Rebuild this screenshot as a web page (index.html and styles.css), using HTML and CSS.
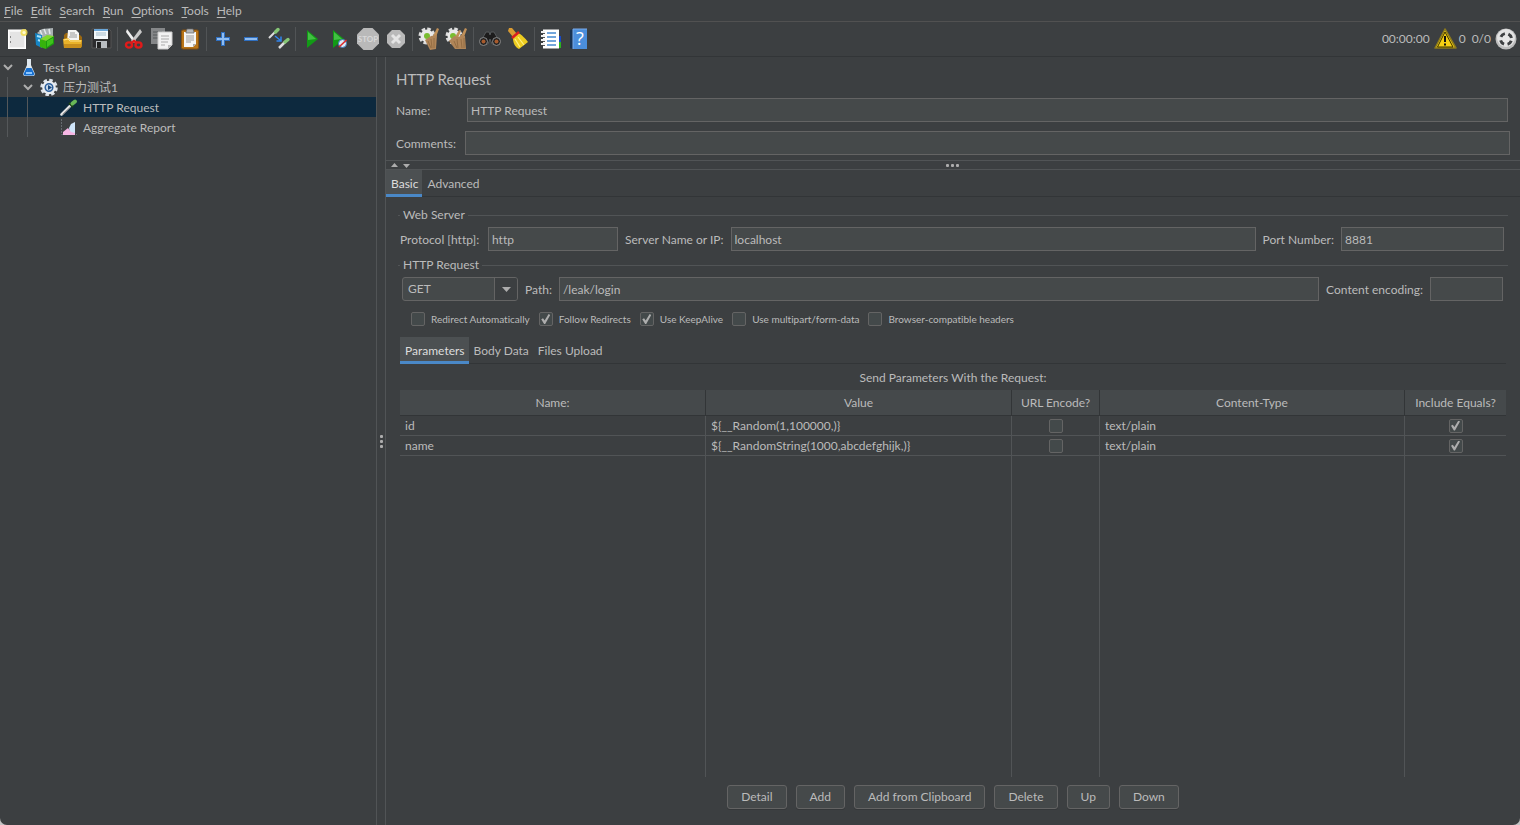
FILE: index.html
```html
<!DOCTYPE html>
<html lang="en">
<head>
<meta charset="utf-8">
<title>HTTP Request</title>
<link rel="stylesheet" href="styles.css">
</head>
<body>
<div class="app">
  <nav class="menubar">
    <button><u>F</u>ile</button><button><u>E</u>dit</button><button><u>S</u>earch</button><button><u>R</u>un</button><button><u>O</u>ptions</button><button><u>T</u>ools</button><button><u>H</u>elp</button>
  </nav>

  <div class="toolbar">
    <button aria-label="New"><svg viewBox="0 0 24 24"><rect x="3.500" y="3" width="17" height="18.500" fill="#f4f4f4" stroke="#fff"/><rect x="5" y="5" width="14" height="15" fill="#e4e4e4"/><path d="M5.500 9v2M5.500 14v2" stroke="#888"/><circle cx="19" cy="5.500" r="3.500" fill="#f1dc4c" opacity=".85"/><circle cx="19" cy="5.500" r="1.600" fill="#fffbd0"/></svg></button>
    <button aria-label="Templates"><svg viewBox="0 0 24 24"><path d="M4 6l5-4 11-1v9l-8 3z" fill="#a9b0b2"/><path d="M7 3l2 5M11 2l2 5M16 2l1 5" stroke="#e4e8ea" stroke-width="1.500"/><path d="M2 6l7 2v13l-6-3z" fill="#1686c5"/><path d="M4 9l4 1M5 13l3 1" stroke="#a6e0fa" stroke-width="2"/><path d="M7 12l6 2v8l-6-2z" fill="#36b30c"/><path d="M13 13l8-4v8l-8 5z" fill="#1c9a0e"/><path d="M7 12l7-4 7 1-8 5z" fill="#7fd92c"/><path d="M14 14l6-3v5l-6 4z" fill="#3ec21c"/></svg></button>
    <button aria-label="Open"><svg viewBox="0 0 24 24"><path d="M3 21V8l2-2h4l1 2h9l2 2v10z" fill="#9b6810"/><path d="M7 3h8l3 3v9H6z" fill="#f5f5f5"/><path d="M9 6h5M9 8h7M8 10h8" stroke="#999"/><path d="M2 12l5-1 2 2h12l-1 8H3z" fill="#eab32a"/><path d="M3 17h18l-1 4H3z" fill="#c98f1c"/><path d="M3 13l4-1 2 2h11" stroke="#ffe48a" fill="none"/></svg></button>
    <button aria-label="Save"><svg viewBox="0 0 24 24"><path d="M3 2h17l2 2v17H3z" fill="#2c2c2e" stroke="#555"/><rect x="5" y="2" width="14" height="10" fill="#f3f7fa"/><rect x="5" y="2" width="14" height="2" fill="#6ba6d8"/><path d="M7 6h10M7 8h10" stroke="#a3bbca"/><rect x="7" y="14" width="11" height="7" fill="#b8bcc0"/><rect x="8" y="15" width="4" height="6" fill="#222"/></svg></button>
    <span class="sep"></span>
    <button aria-label="Cut"><svg viewBox="0 0 24 24"><path d="M5 2l9 12-2 2L4 5z" fill="#efefef"/><path d="M18 2l-9 12 2 2 9-11z" fill="#c9c9c9"/><ellipse cx="7" cy="18" rx="3" ry="2.600" fill="none" stroke="#e01a1a" stroke-width="2.400"/><ellipse cx="16.500" cy="18" rx="3" ry="2.600" fill="none" stroke="#e01a1a" stroke-width="2.400"/><path d="M9 16l3-2 3 2" stroke="#e01a1a" stroke-width="2.500" fill="none"/></svg></button>
    <button aria-label="Copy"><svg viewBox="0 0 24 24"><path d="M1 1h14v16H1z" fill="#858789"/><path d="M3 5h9M3 8h7M3 11h5" stroke="#66696b" stroke-width="1.500"/><path d="M8 5h14v13l-4 4H8z" fill="#f2f2f2" stroke="#ccc"/><path d="M11 9h8M11 12h8M11 15h7M11 18h4" stroke="#aaa"/><path d="M22 18h-4v4z" fill="#bbb"/></svg></button>
    <button aria-label="Paste"><svg viewBox="0 0 24 24"><rect x="3.500" y="3" width="17" height="19" rx="1.500" fill="#b87418" stroke="#845110"/><path d="M6 5h12v12l-3 3H6z" fill="#f6f6f6"/><path d="M8 5l1-3h6l1 3v1H8z" fill="#b4b7ba" stroke="#666" stroke-width=".7"/><path d="M8 9h8M8 11h8M8 13h8M8 15h5" stroke="#999"/><path d="M18 17h-3v3z" fill="#aaa"/></svg></button>
    <span class="sep"></span>
    <button aria-label="Expand all"><svg viewBox="0 0 24 24"><path d="M12 5v14M5 12h14" stroke="#2f6fc0" stroke-width="4"/><path d="M12 6v12M6 12h12" stroke="#8fbcf0" stroke-width="2"/></svg></button>
    <button aria-label="Collapse all"><svg viewBox="0 0 24 24"><path d="M5 12h14" stroke="#2f6fc0" stroke-width="4"/><path d="M6 12h12" stroke="#8fbcf0" stroke-width="2"/></svg></button>
    <button aria-label="Toggle"><svg viewBox="0 0 24 24"><path d="M2 11l6-6" stroke="#ddd" stroke-width="2"/><path d="M8.500 5l2.500-2.500" stroke="#86c676" stroke-width="3.500" stroke-linecap="round"/><path d="M12 21l6-6" stroke="#ddd" stroke-width="2.500"/><path d="M18 15l3-2.500" stroke="#86c676" stroke-width="3.500" stroke-linecap="round"/><path d="M8 9l5 4M14 9.500V14H9.500" stroke="#3185ee" stroke-width="1.500" fill="none"/></svg></button>
    <span class="sep"></span>
    <button aria-label="Start"><svg viewBox="0 0 24 24"><path d="M7 3l11 9L7 21z" fill="#129a16"/><path d="M8 5l8 7-8 1z" fill="#42c043"/></svg></button>
    <button aria-label="Start no pauses"><svg viewBox="0 0 24 24"><path d="M5 3l11 9L5 21z" fill="#129a16"/><path d="M6 5l8 7-8 1z" fill="#42c043"/><circle cx="14.500" cy="16.500" r="4" fill="#dceaf6" stroke="#3a78b8"/><path d="M11 20l7.500-7" stroke="#dc2b2b" stroke-width="1.600"/></svg></button>
    <button aria-label="Stop" disabled><svg viewBox="0 0 24 24"><path d="M7.500 1h9L23 7.500v9L16.500 23h-9L1 16.500v-9z" fill="#b9b9b9"/><text x="12" y="15" font-size="8" font-weight="700" text-anchor="middle" fill="#d8d8d8">STOP</text></svg></button>
    <button aria-label="Shutdown" disabled><svg viewBox="0 0 24 24"><path d="M8 3h8l5 5v8l-5 5H8l-5-5V8z" fill="#b9b9b9"/><path d="M8 8l8 8M16 8l-8 8" stroke="#e5e5e5" stroke-width="3"/></svg></button>
    <span class="sep"></span>
    <button aria-label="Clear"><svg viewBox="0 0 24 24"><circle cx="10" cy="9" r="7" fill="none" stroke="#dedede" stroke-width="3" stroke-dasharray="3.500 2"/><circle cx="10" cy="9" r="6.500" fill="#e9e9e9"/><circle cx="10" cy="9" r="3" fill="#79bd30"/><path d="M20 1l2 1-3 8-3-1z" fill="#c09058"/><path d="M14 9l6-1-1 14-6 1-5-10z" fill="#b08558"/><path d="M14 12l1 9M17 11v10M11 14l3 7" stroke="#8d673f" stroke-width=".8"/></svg></button>
    <button aria-label="Clear all"><svg viewBox="0 0 24 24"><circle cx="9" cy="9" r="7" fill="none" stroke="#dedede" stroke-width="3" stroke-dasharray="3.500 2"/><circle cx="9" cy="9" r="6.500" fill="#e9e9e9"/><circle cx="8" cy="9" r="3" fill="#79bd30"/><path d="M14 3l2 1-3 7-3-1zM20 1l2 1-3 8-3-1z" fill="#c09058"/><path d="M9 9l5 1 2-2 4 1 1 13H10L4 14z" fill="#b08558"/><path d="M9 14l3 7M12 12l1 9M16 12l1 9M19 11v10" stroke="#8d673f" stroke-width=".8"/></svg></button>
    <span class="sep"></span>
    <button aria-label="Search"><svg viewBox="0 0 24 24"><path d="M4 12l4-7h3l1 3 1-3h3l4 7-2 5h-4l-2-5-2 5H6z" fill="#1c1c1c" stroke="#55595b"/><circle cx="5.500" cy="14.500" r="4" fill="#232323" stroke="#8a8a8a"/><circle cx="5.500" cy="14.500" r="2" fill="#a85b2d"/><circle cx="18.500" cy="14.500" r="4" fill="#232323" stroke="#8a8a8a"/><circle cx="18.500" cy="14.500" r="2" fill="#a85b2d"/></svg></button>
    <button aria-label="Reset search"><svg viewBox="0 0 24 24"><path d="M3 1h3l5 6-4 3-5-6z" fill="#d99b32"/><path d="M7 11l5-5c3 1 7 5 10 9l-9 7c-4-2-6-6-6-11z" fill="#edcc20"/><path d="M9 12l5 8M12 10l6 8" stroke="#fff083" stroke-width="1.200"/><path d="M6 11l7-6" stroke="#d81f1f" stroke-width="2.500"/></svg></button>
    <span class="sep"></span>
    <button aria-label="Function helper"><svg viewBox="0 0 24 24"><path d="M18 14h4v7h-6z" fill="#2bb321"/><path d="M18 9h4v6h-4z" fill="#174ac5"/><rect x="4" y="2.500" width="16" height="19" fill="#fff"/><path d="M8 6h9M8 10h9M8 14h9M8 18h9" stroke="#4589cf" stroke-width="1.500"/><path d="M2 5h4M2 9h4M2 13h4M2 17h4" stroke="#f2f2f2" stroke-width="2"/><path d="M4 6.500h2M4 10.500h2M4 14.500h2M4 18.500h2" stroke="#555"/></svg></button>
    <button aria-label="Help"><svg viewBox="0 0 24 24"><path d="M3 3l3-1v20l-3-1z" fill="#183250"/><rect x="6" y="2" width="14" height="20" fill="#4b8edb"/><path d="M6 22V2h14" stroke="#7aabea" fill="none"/><text class="mark" x="13" y="18" font-size="18" text-anchor="middle" fill="#fff">?</text></svg></button>
    <div class="status">
      <span class="clock">00:00:00</span>
      <svg viewBox="0 0 24 24"><path d="M12 2L2 21h21z" fill="#f5cf13" stroke="#8c7a1c" stroke-width="1.500" stroke-linejoin="round"/><path d="M12 5L4.500 20h15.500z" fill="none" stroke="#3b3300"/><path d="M12 9v6M12 16.500v2" stroke="#111" stroke-width="2"/></svg>
      <span class="errors">0</span>
      <span>0/0</span>
      <svg viewBox="0 0 24 24"><circle cx="12" cy="12" r="10.500" fill="#bdbdbd"/><circle cx="12" cy="11" r="9" fill="#e4e4e4"/><circle cx="12" cy="12" r="5.500" fill="none" stroke="#3e4042" stroke-width="3" stroke-dasharray="5 3.640" stroke-dashoffset="-1.800"/><circle cx="12" cy="12" r="3.500" fill="#e8e8e8"/></svg>
    </div>
  </div>

  <main class="workspace">
    <aside class="tree">
      <div class="node"><svg class="chevron" viewBox="0 0 20 20"><path d="M4 8l4 4 4-4"/></svg><svg class="pic" viewBox="0 0 18 18"><path d="M7 1h4v6l4 9-1 2H4l-1-2 4-9z" fill="#dfe8ef"/><path d="M6.500 10h5l3 6-1 1.500h-9L3.500 16z" fill="#1870cf"/><path d="M6 15h6" stroke="#8cc6ff" stroke-width="2"/></svg><span>Test Plan</span></div>
      <div class="node"><i class="guide"></i><svg class="chevron" viewBox="0 0 20 20"><path d="M4 8l4 4 4-4"/></svg><svg class="pic" viewBox="0 0 18 18"><circle cx="9" cy="9.500" r="7" fill="none" stroke="#dce2e9" stroke-width="3.500" stroke-dasharray="3.300 2.200"/><circle cx="9" cy="9.500" r="6.800" fill="#e9edf1"/><circle cx="9" cy="9.500" r="3.800" fill="#c8d8e8" stroke="#2d609d" stroke-width="1.500"/><path d="M8 7l4 2.500L8 12z" fill="#17477f"/></svg><span>压力测试1</span></div>
      <div class="node selected"><i class="guide"></i><i class="guide"></i><i class="indent"></i><svg class="pic" viewBox="0 0 18 18"><path d="M1.500 16.500L10 8" stroke="#e4e4e4" stroke-width="2.500" stroke-linecap="round"/><path d="M2.500 16.500L10.500 9" stroke="#888"/><path d="M9 5l4 4" stroke="#1d4315" stroke-width="2"/><path d="M12.500 5.500l2.500-2" stroke="#69b857" stroke-width="4" stroke-linecap="round"/></svg><span>HTTP Request</span></div>
      <div class="node"><i class="guide"></i><i class="guide"></i><i class="indent"></i><svg class="pic" viewBox="0 0 18 18"><path d="M1.500 1v15.500H17" stroke="#666b70" fill="none" stroke-dasharray="2 1"/><path d="M9 10l2-4 4-2v11l-5 1z" fill="#cfe5fa"/><path d="M3 17v-3l5-4 3 4 4 1v2z" fill="#f6b6e4"/></svg><span>Aggregate Report</span></div>
    </aside>
    <div class="divider"><i></i><i></i><i></i></div>

    <section class="editor">
      <header class="heading">
        <h1>HTTP Request</h1>
        <div class="line name-line"><label for="name">Name:</label><input id="name" type="text" value="HTTP Request"></div>
        <div class="line comment-line"><label for="comments">Comments:</label><input id="comments" type="text"></div>
      </header>
      <div class="splitter"><svg class="arrows" viewBox="0 0 20 8"><path d="M0 6l3.500-4L7 6zM12 3h7l-3.500 4z"/></svg><div class="dots"><i></i><i></i><i></i></div></div>
      <div class="tabs"><button class="active">Basic</button><button>Advanced</button></div>

      <div class="panel">
        <fieldset>
          <legend>Web Server</legend>
          <div class="fields">
            <label for="protocol" class="protocol-label">Protocol [http]:</label><input id="protocol" class="protocol" type="text" value="http">
            <label for="server">Server Name or IP:</label><input id="server" class="grow" type="text" value="localhost">
            <label for="port">Port Number:</label><input id="port" class="port" type="text" value="8881">
          </div>
        </fieldset>
        <fieldset>
          <legend>HTTP Request</legend>
          <div class="fields request">
            <div class="combo"><select aria-label="Method"><option>GET</option><option>POST</option></select><span class="drop"><svg viewBox="0 0 9 5"><path d="M0 0h9L4.500 5z"/></svg></span></div>
            <label for="path">Path:</label><input id="path" class="grow" type="text" value="/leak/login">
            <label for="encoding">Content encoding:</label><input id="encoding" class="encoding" type="text">
          </div>
          <div class="checks">
            <label><input type="checkbox">Redirect Automatically</label>
            <label><input type="checkbox" checked>Follow Redirects</label>
            <label><input type="checkbox" checked>Use KeepAlive</label>
            <label><input type="checkbox">Use multipart/form-data</label>
            <label><input type="checkbox">Browser-compatible headers</label>
          </div>
        </fieldset>
        <div class="params">
          <div class="tabs"><button class="active">Parameters</button><button>Body Data</button><button>Files Upload</button></div>
          <div class="caption">Send Parameters With the Request:</div>
          <div class="grid">
            <table>
              <colgroup><col class="c-name"><col class="c-name"><col class="c-encode"><col><col class="c-equals"></colgroup>
              <thead><tr><th>Name:</th><th>Value</th><th>URL Encode?</th><th>Content-Type</th><th>Include Equals?</th></tr></thead>
              <tbody>
                <tr><td>id</td><td>${__Random(1,100000,)}</td><td class="mid"><input type="checkbox" aria-label="URL Encode id"></td><td>text/plain</td><td class="mid"><input type="checkbox" aria-label="Include Equals id" checked></td></tr>
                <tr><td>name</td><td>${__RandomString(1000,abcdefghijk,)}</td><td class="mid"><input type="checkbox" aria-label="URL Encode name"></td><td>text/plain</td><td class="mid"><input type="checkbox" aria-label="Include Equals name" checked></td></tr>
                <tr class="rest"><td></td><td></td><td></td><td></td><td></td></tr>
              </tbody>
            </table>
          </div>
        </div>
      </div>
      <div class="actions"><button>Detail</button><button>Add</button><button>Add from Clipboard</button><button>Delete</button><button>Up</button><button>Down</button></div>
    </section>
  </main>
</div>
</body>
</html>
```
FILE: styles.css
```css
* { box-sizing: border-box; }
body {
  margin: 0;
  background: #c4c4c4;
  color: #bbb;
  font: 12px/16px Lato, "Noto Sans CJK SC", sans-serif;
  font-variant-ligatures: none;
}
button, input, select { font: inherit; font-variant-ligatures: none; color: inherit; margin: 0; }
button { background: none; border: 0; padding: 0; }
svg { display: block; flex: none; }
.app { display: flex; flex-direction: column; height: 100vh; background: #3c3f41; border-radius: 0 0 7px 7px; }

.menubar { display: flex; height: 22px; padding-left: 4px; gap: 8px; border-bottom: 1px solid #515151; }
.menubar u { text-underline-offset: 2px; }

.toolbar { display: flex; align-items: center; height: 35px; padding-left: 3px; border-bottom: 1px solid #323537; }
.toolbar button { display: flex; justify-content: center; width: 28px; }
.toolbar svg { width: 24px; height: 24px; }
.mark { font-family: "Open Sans", sans-serif; }
.sep { width: 1px; height: 24px; margin: 0 2px; background: #515456; }
.status { display: flex; align-items: center; gap: 5px; margin-left: auto; padding-right: 2px; }
.status .errors { margin: 0 1px 0 -3px; }
.status span + svg { margin-left: -2px; }

.workspace { display: flex; flex: 1; min-height: 0; }
.tree { width: 377px; border-right: 1px solid #515456; }
.node { display: flex; align-items: center; height: 20px; }
.node span { padding-top: 2px; }
.node .guide, .node .indent { width: 20px; height: 20px; }
.guide { background: linear-gradient(#55585a, #55585a) 7px 0 / 1px 100% no-repeat; }
.chevron { width: 20px; height: 20px; fill: none; stroke: #adadad; stroke-width: 2; }
.pic { width: 18px; height: 18px; margin-right: 5px; }
.selected { background: #0d293e; }
.divider { display: flex; flex-direction: column; align-items: center; justify-content: center; gap: 2px; width: 9px; border-right: 1px solid #515456; }
.divider i, .dots i { width: 3px; height: 3px; border-radius: 1px; background: #adadad; }

.editor { display: flex; flex-direction: column; flex: 1; min-width: 0; }
.heading { padding: 11px 10px 5px; }
h1 { margin: 0 0 8px; font-size: 15px; line-height: 22px; font-weight: 400; }
.line { display: flex; align-items: center; }
.name-line { padding-right: 2px; margin-bottom: 9px; }
.line label { width: 69px; }
.name-line label { width: 71px; }
.line label, .fields label { padding-top: 2px; }
input[type="text"] { height: 24px; min-width: 0; padding: 0 3px; border: 1px solid #646464; border-radius: 0; background: #45494a; outline: 0; }
.line input { flex: 1; }

.splitter { display: flex; align-items: center; height: 10px; padding: 0 26px 0 5px; border: solid #515456; border-width: 1px 0; }
.arrows { width: 20px; height: 8px; fill: #adadad; }
.dots { display: flex; gap: 2px; margin: 0 auto; }

.tabs { display: flex; border-bottom: 1px solid #323537; }
.tabs button { height: 27px; margin-bottom: -1px; padding: 3px 4px 0 5px; border-bottom: 3px solid transparent; }
.tabs .active { background: #4c5052; border-color: #4a88c7; color: #ddd; }

.panel { display: flex; flex-direction: column; flex: 1; min-height: 0; padding: 10px 12px 0; }
fieldset { min-width: 0; margin: 0; padding: 0; border: 0; border-top: 1px solid #515456; }
legend { margin-left: 2px; padding: 0 3px; }
.fields { display: flex; align-items: center; gap: 7px; padding: 4px 4px 6px 2px; }
.request { padding-left: 4px; padding-right: 5px; }
.grow { flex: 1; }
.protocol-label { min-width: 81px; }
.protocol { width: 130px; }
.port { width: 163px; }
.encoding { width: 73px; }
.combo { display: flex; position: relative; width: 116px; height: 24px; border: 1px solid #646464; border-radius: 3px; background: #45494a; }
.combo select { width: 100%; padding: 0 5px; border: 0; background: none; appearance: none; outline: 0; }
.drop { position: absolute; right: 0; top: 0; bottom: 0; display: flex; align-items: center; justify-content: center; width: 23px; border-left: 1px solid #646464; background: #3c3f41; pointer-events: none; border-radius: 0 2px 2px 0; }
.drop svg { width: 9px; height: 5px; fill: #adadad; }

.checks { display: flex; gap: 9px; padding: 4px 13px 0; font-size: 10px; }
.checks label { display: flex; align-items: center; gap: 6px; }
input[type="checkbox"] { appearance: none; display: inline-grid; place-items: center; width: 14px; height: 14px; border: 1px solid #646464; border-radius: 2px; background: #43494a; }
input[type="checkbox"]:checked::before { content: ""; width: 9px; height: 10px; background: #adadad; clip-path: polygon(0 52%, 20% 42%, 38% 66%, 82% 0, 100% 10%, 44% 100%, 32% 100%); }

.params { display: flex; flex-direction: column; flex: 1; min-height: 0; padding: 10px 2px 0; }
.caption { padding: 6px 0 4px; text-align: center; }
.grid { flex: 1; min-height: 0; }
table { width: 100%; height: 100%; table-layout: fixed; border-collapse: separate; border-spacing: 0; }
.c-name { width: 306px; }
.c-encode { width: 88px; }
.c-equals { width: 101px; }
th, td { padding: 0 5px; border-right: 1px solid #515456; border-bottom: 1px solid #515456; }
th { height: 26px; padding-top: 1px; font-weight: 400; background: #45494b; border-color: #323537; }
td { height: 20px; text-align: left; }
th:last-child, td:last-child { border-right: 0; }
.mid { text-align: center; line-height: 0; }
.rest td { height: auto; border-bottom: 0; }

.actions { display: flex; justify-content: center; gap: 9px; padding: 8px 0 16px; }
.actions button { height: 24px; padding: 0 13px; border: 1px solid #646464; border-radius: 3px; background: #45494a; box-shadow: 0 1px 0 #35383a; }
```
